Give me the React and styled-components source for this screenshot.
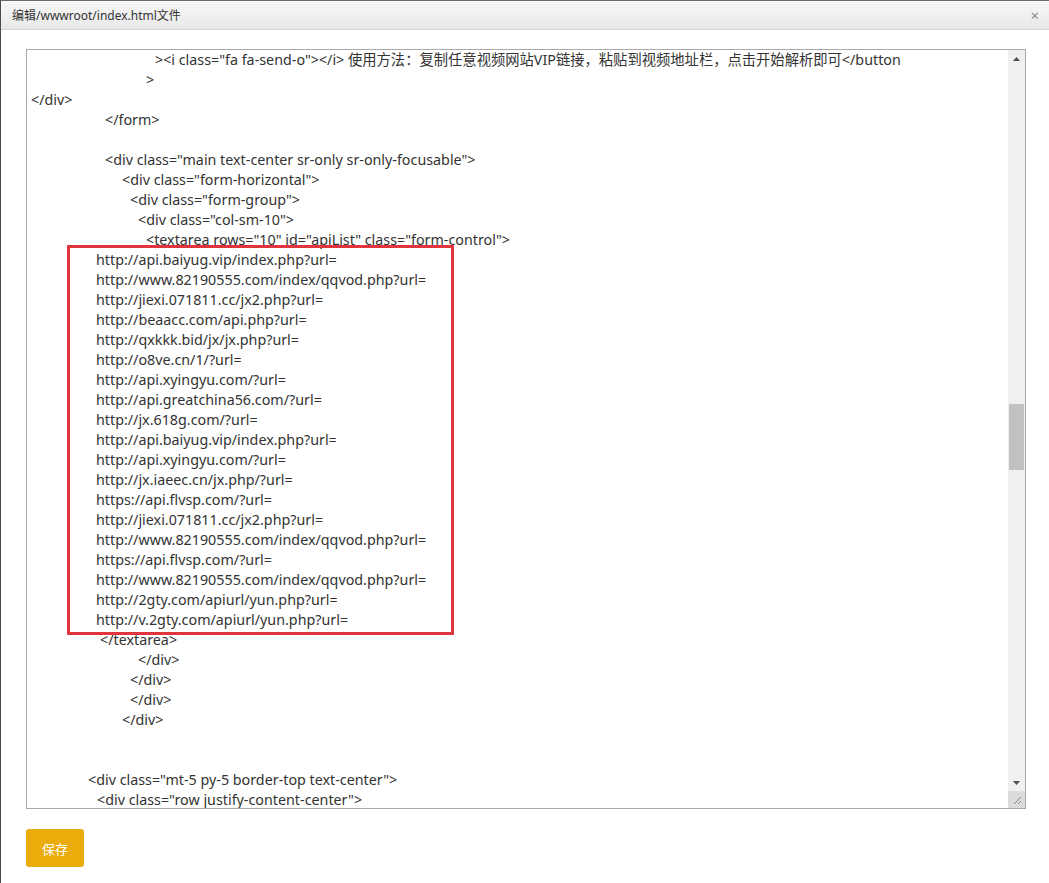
import React from 'react'
import styled, { createGlobalStyle } from 'styled-components'

const Global = createGlobalStyle`
  html, body { margin: 0; padding: 0; background: #fff; }
  body { font-family: "Noto Sans", "Noto Sans CJK SC", sans-serif; }
`

const Window = styled.div`
  width: 1049px;
  height: 883px;
  box-sizing: border-box;
  border-left: 1px solid #4a4a4a;
  border-top: 1px solid #6a6a6a;
  background: #fff;
  display: flex;
  flex-direction: column;
`

const TitleBar = styled.div`
  height: 29px;
  box-sizing: border-box;
  display: flex;
  align-items: center;
  justify-content: space-between;
  padding: 0 10px 0 11px;
  background: linear-gradient(#f8f8f8, #e8e8e8);
  border-bottom: 1px solid #d4d4d4;
  font-size: 12px;
  color: #333;
`

const Close = styled.span`
  font-size: 15px;
  color: #888;
  line-height: 1;
`

const Body = styled.div`
  padding: 19px 23px 0 25px;
  display: flex;
  flex-direction: column;
  align-items: flex-start;
  gap: 20px;
`

const Editor = styled.div`
  width: 1000px;
  height: 760px;
  box-sizing: border-box;
  border: 1px solid #a9a9a9;
  display: flex;
  position: relative;
`

const Code = styled.div`
  flex: 1;
  overflow: hidden;
  font-size: 14.3px;
  line-height: 20px;
  color: #333;
  white-space: pre;
`

const Line = styled.div`
  height: 20px;
  padding-left: ${p => p.$x - 27}px;
`

const Highlight = styled.div`
  position: absolute;
  left: 40px;
  top: 195px;
  width: 381px;
  height: 384px;
  border: 3px solid #e0353d;
  border-radius: 1px;
  pointer-events: none;
`

const Scrollbar = styled.div`
  width: 17px;
  background: #f0f0f0;
  display: flex;
  flex-direction: column;
`

const Arrow = styled.div`
  height: 17px;
  display: flex;
  align-items: center;
  justify-content: center;
`

const Track = styled.div`
  flex: 1;
  display: flex;
  flex-direction: column;
  padding-top: ${p => p.$top}px;
`

const Thumb = styled.div`
  margin: 0 1px;
  height: 66px;
  background: #c1c1c1;
`

const Grip = styled.div`
  height: 17px;
  background: #dcdcdc;
  display: flex;
  align-items: center;
  justify-content: center;
`

const SaveButton = styled.button`
  width: 58px;
  height: 38px;
  border: none;
  border-radius: 3px;
  background: #eaac0b;
  color: #fff;
  font-family: "Noto Sans CJK SC", sans-serif;
  font-size: 13px;
  padding: 0;
`

const lines = [
  [155, '><i class="fa fa-send-o"></i> 使用方法：复制任意视频网站VIP链接，粘贴到视频地址栏，点击开始解析即可</button'],
  [146, '>'],
  [31, '</div>'],
  [105, '</form>'],
  [31, ''],
  [105, '<div class="main text-center sr-only sr-only-focusable">'],
  [122, '<div class="form-horizontal">'],
  [130, '<div class="form-group">'],
  [138, '<div class="col-sm-10">'],
  [146, '<textarea rows="10" id="apiList" class="form-control">'],
  [96, 'http://api.baiyug.vip/index.php?url='],
  [96, 'http://www.82190555.com/index/qqvod.php?url='],
  [96, 'http://jiexi.071811.cc/jx2.php?url='],
  [96, 'http://beaacc.com/api.php?url='],
  [96, 'http://qxkkk.bid/jx/jx.php?url='],
  [96, 'http://o8ve.cn/1/?url='],
  [96, 'http://api.xyingyu.com/?url='],
  [96, 'http://api.greatchina56.com/?url='],
  [96, 'http://jx.618g.com/?url='],
  [96, 'http://api.baiyug.vip/index.php?url='],
  [96, 'http://api.xyingyu.com/?url='],
  [96, 'http://jx.iaeec.cn/jx.php/?url='],
  [96, 'https://api.flvsp.com/?url='],
  [96, 'http://jiexi.071811.cc/jx2.php?url='],
  [96, 'http://www.82190555.com/index/qqvod.php?url='],
  [96, 'https://api.flvsp.com/?url='],
  [96, 'http://www.82190555.com/index/qqvod.php?url='],
  [96, 'http://2gty.com/apiurl/yun.php?url='],
  [96, 'http://v.2gty.com/apiurl/yun.php?url='],
  [100, '</textarea>'],
  [138, '</div>'],
  [130, '</div>'],
  [130, '</div>'],
  [122, '</div>'],
  [31, ''],
  [31, ''],
  [88, '<div class="mt-5 py-5 border-top text-center">'],
  [97, '<div class="row justify-content-center">'],
]

const App = () => {
  return (
    <Window>
      <Global />
      <TitleBar>
        <span>编辑/wwwroot/index.html文件</span>
        <Close>×</Close>
      </TitleBar>
      <Body>
        <Editor>
          <Code>
            {lines.map(([x, text], i) => (
              <Line key={i} $x={x}>{text}</Line>
            ))}
          </Code>
          <Highlight />
          <Scrollbar>
            <Arrow>
              <svg width="7" height="4" viewBox="0 0 7 4"><path d="M0 4 L3.5 0 L7 4 Z" fill="#505050" /></svg>
            </Arrow>
            <Track $top={337}>
              <Thumb />
            </Track>
            <Arrow>
              <svg width="7" height="4" viewBox="0 0 7 4"><path d="M0 0 L3.5 4 L7 0 Z" fill="#505050" /></svg>
            </Arrow>
            <Grip>
              <svg width="11" height="11" viewBox="0 0 11 11">
                <path d="M10 3 L3 10 M10 7 L7 10" stroke="#888" strokeWidth="1" />
              </svg>
            </Grip>
          </Scrollbar>
        </Editor>
        <SaveButton>保存</SaveButton>
      </Body>
    </Window>
  )
}

export default App
